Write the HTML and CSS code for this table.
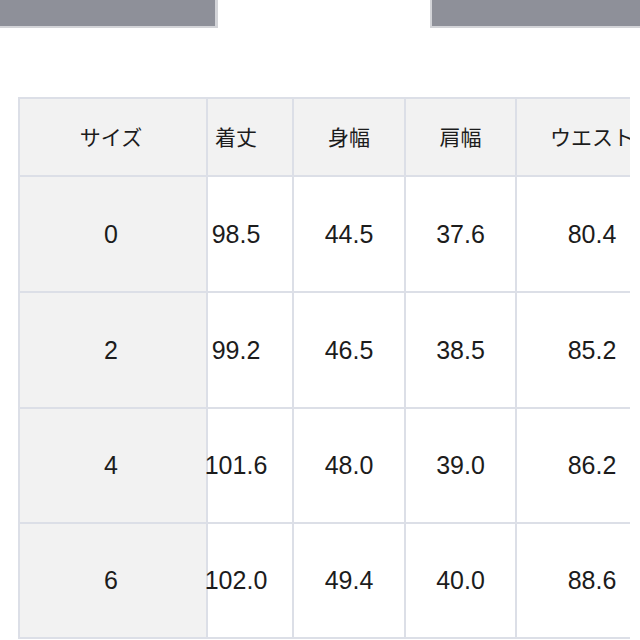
FILE: index.html
```html
<!DOCTYPE html>
<html lang="ja">
<head>
<meta charset="utf-8">
<link rel="stylesheet" href="styles.css">
</head>
<body>
<div class="tabs">
  <div class="tab tab-left"></div>
  <div class="tab tab-right"></div>
</div>
<div class="table-wrap">
  <div class="size-table">
    <div class="cell head first">サイズ</div>
    <div class="cell head c2">着丈</div>
    <div class="cell head">身幅</div>
    <div class="cell head">肩幅</div>
    <div class="cell head">ウエスト</div>

    <div class="cell num first">0</div>
    <div class="cell num c2">98.5</div>
    <div class="cell num">44.5</div>
    <div class="cell num">37.6</div>
    <div class="cell num">80.4</div>

    <div class="cell num first">2</div>
    <div class="cell num c2">99.2</div>
    <div class="cell num">46.5</div>
    <div class="cell num">38.5</div>
    <div class="cell num">85.2</div>

    <div class="cell num first">4</div>
    <div class="cell num c2">101.6</div>
    <div class="cell num">48.0</div>
    <div class="cell num">39.0</div>
    <div class="cell num">86.2</div>

    <div class="cell num first">6</div>
    <div class="cell num c2">102.0</div>
    <div class="cell num">49.4</div>
    <div class="cell num">40.0</div>
    <div class="cell num">88.6</div>
  </div>
</div>
</body>
</html>
```

FILE: styles.css
```css
html, body {
  margin: 0;
  padding: 0;
  background: #ffffff;
}

body {
  width: 640px;
  height: 640px;
  overflow: hidden;
  font-family: "Liberation Sans", Arial, "Noto Sans CJK JP", sans-serif;
  color: #1c1c1c;
}

.tabs {
  display: flex;
  justify-content: space-between;
  height: 28px;
}

.tab {
  box-sizing: border-box;
  height: 28px;
  background: #8e9099;
  border-bottom: 2px solid #d3d4d8;
}

.tab-left {
  width: 218px;
  border-right: 3px solid #d3d4d8;
}

.tab-right {
  width: 210px;
  border-left: 2px solid #d3d4d8;
}

.table-wrap {
  margin: 69px 0 0 18px;
  width: 612px;
  overflow: hidden;
}

.size-table {
  display: grid;
  grid-template-columns: 188px 86px 112px 111px 152px;
  grid-template-rows: 78px 116px 116px 115px 115px;
  width: max-content;
  border-top: 2px solid #dcdfe7;
  border-left: 2px solid #dcdfe7;
}

.cell {
  box-sizing: border-box;
  display: flex;
  align-items: center;
  justify-content: center;
  border-right: 2px solid #dcdfe7;
  border-bottom: 2px solid #dcdfe7;
  background: #ffffff;
  white-space: nowrap;
}

.head {
  background: #f2f2f2;
  font-family: "Noto Sans CJK JP", sans-serif;
  font-size: 21px;
  padding-bottom: 2px;
}

.num {
  font-size: 25px;
}

.first {
  background: #f2f2f2;
  padding-right: 4px;
}

.c2 {
  padding-right: 28px;
}
```
